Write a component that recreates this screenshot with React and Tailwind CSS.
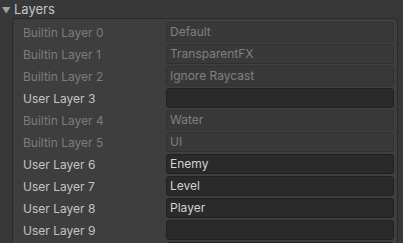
import React from 'react';

const layers = [
    { label: 'Builtin Layer 0', value: 'Default', builtin: true },
    { label: 'Builtin Layer 1', value: 'TransparentFX', builtin: true },
    { label: 'Builtin Layer 2', value: 'Ignore Raycast', builtin: true },
    { label: 'User Layer 3', value: '', builtin: false },
    { label: 'Builtin Layer 4', value: 'Water', builtin: true },
    { label: 'Builtin Layer 5', value: 'UI', builtin: true },
    { label: 'User Layer 6', value: 'Enemy', builtin: false },
    { label: 'User Layer 7', value: 'Level', builtin: false },
    { label: 'User Layer 8', value: 'Player', builtin: false },
    { label: 'User Layer 9', value: '', builtin: false },
    { label: '', value: '', builtin: false },
];

export default function App() {
    return (
        <div className="w-[403px] h-[243px] overflow-hidden bg-[#383838] text-[12px] flex flex-col" style={{ fontFamily: 'Inter, "Liberation Sans", sans-serif' }}>
            <div className="h-[18px] shrink-0 flex items-center pl-[2px] text-[#c4c4c4]">
                <svg width="9" height="8" viewBox="0 0 9 8" className="mr-[3px] mt-[1px]">
                    <path d="M0 1 L8.5 1 L4.25 7.5 Z" fill="#a0a0a0" />
                </svg>
                <span className="text-[13px] leading-none mt-[1px]">Layers</span>
            </div>
            <div className="flex-1 ml-[12px] mr-[5px] bg-[#3e3e3e] border-l border-t border-r border-[#2a2a2a] rounded-tl-[4px] rounded-tr-[4px] pt-[3px] pr-[3px] flex flex-col gap-[2px]">
                {layers.map((l, i) => (
                    <div key={i} className="flex items-center h-[20px] shrink-0">
                        <span className={`w-[153px] pl-[10px] shrink-0 mt-[1px] ${l.builtin ? 'text-[#7c7c7c]' : 'text-[#c4c4c4]'}`}>{l.label}</span>
                        <div className={`flex-1 h-full rounded-[3px] border flex items-center pl-[3px] ${l.builtin ? 'bg-[#393939] border-[#303030] text-[#808080]' : 'bg-[#2a2a2a] border-[#212121] text-[#d2d2d2]'}`}>
                            {l.value}
                        </div>
                    </div>
                ))}
            </div>
        </div>
    );
}
